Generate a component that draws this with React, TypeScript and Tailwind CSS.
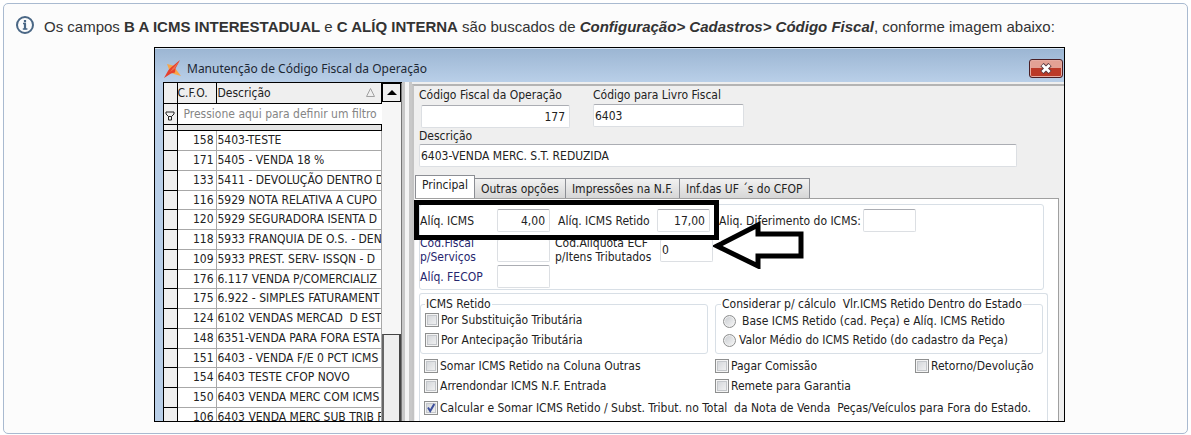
import React, { useState } from 'react';

const cfops = [
  { code: '158', name: '5403-TESTE' },
  { code: '171', name: '5405 - VENDA 18 %' },
  { code: '133', name: '5411 - DEVOLUÇÃO DENTRO D' },
  { code: '116', name: '5929 NOTA RELATIVA A CUPO' },
  { code: '120', name: '5929 SEGURADORA ISENTA D' },
  { code: '118', name: '5933 FRANQUIA DE O.S. - DEN' },
  { code: '109', name: '5933 PREST. SERV- ISSQN - D' },
  { code: '176', name: '6.117 VENDA P/COMERCIALIZ' },
  { code: '175', name: '6.922 - SIMPLES FATURAMENT' },
  { code: '124', name: '6102 VENDAS MERCAD  D EST' },
  { code: '148', name: '6351-VENDA PARA FORA ESTA' },
  { code: '151', name: '6403 - VENDA F/E 0 PCT ICMS' },
  { code: '154', name: '6403 TESTE CFOP NOVO' },
  { code: '150', name: '6403 VENDA MERC COM ICMS' },
  { code: '106', name: '6403 VENDA MERC SUB TRIB F' },
];

const tabs = ['Principal', 'Outras opções', 'Impressões na N.F.', 'Inf.das UF ´s do CFOP'];

const inputClass =
  'block h-[23px] rounded-[2px] border border-[#dcdfe3] border-t-[#abadb3] bg-white pr-1 pl-px text-[#222] outline-none';

interface CheckProps {
  label: string;
  className?: string;
  defaultChecked?: boolean;
}

const Check: React.FC<CheckProps> = ({ label, className = '', defaultChecked }) => (
  <label className={`flex items-center gap-0.5 whitespace-pre ${className}`}>
    <span className="relative block size-[14px] shrink-0">
      <input
        type="checkbox"
        defaultChecked={defaultChecked}
        className="peer block size-[14px] appearance-none border border-[#8e8f8f] bg-linear-to-br from-[#cfd2d6] to-[#f6f6f6] shadow-[inset_0_0_0_1px_#f4f4f4,inset_0_0_0_2px_#c4c7cb]"
      />
      <svg viewBox="0 0 14 14" className="pointer-events-none absolute inset-0 hidden peer-checked:block">
        <path d="M4 6.5 L6.2 10 L10.3 3" fill="none" stroke="#3c4f9c" strokeWidth="2" />
      </svg>
    </span>
    {label}
  </label>
);

const Radio: React.FC<{ label: string; className: string }> = ({ label, className }) => (
  <label className={`flex items-center whitespace-pre ${className}`}>
    <input
      type="radio"
      name="calculo"
      className="size-[13px] shrink-0 appearance-none rounded-full border border-[#8e8f8f] bg-linear-to-br from-[#c8cbcf] to-[#f8f8f8] shadow-[inset_0_0_0_1px_#f0f0f0] checked:bg-[#3c4f9c]"
    />
    {label}
  </label>
);

const TitleBar: React.FC = () => (
  <div className="flex h-[34px] items-center border-t border-[#dce8f5] bg-linear-to-b from-[#9cb6d3] to-[#b9cfe8] pr-px pl-[9px]">
    <svg viewBox="0 0 18 18" className="mt-1.5 size-[18px]">
      <path d="M3 4 L9 5.5 L12.5 10 L17 16 L10 14 L6 12 Z" fill="#f8a548" />
      <path d="M16 0 L11.5 8.5 L11 12.5 L7 13.5 L0 18 L4.5 10 L7 7.5 Z" fill="#e6402c" />
      <path d="M15 1.5 L8.5 8.5 L6 12 L10.5 9 Z" fill="#f0714f" />
    </svg>
    <h2 className="mt-[7px] ml-[5px] flex-1 font-['Noto_Sans','Open_Sans',sans-serif] text-[12px] text-[#1c2733]">
      Manutenção de Código Fiscal da Operação
    </h2>
    <button
      type="button"
      aria-label="Fechar"
      className="mt-1.5 flex h-[19px] w-[34px] items-center justify-center rounded-[3px] border border-[#4a1f25] bg-linear-to-b from-[#e3a194] from-45% to-[#bb3a28] to-50% shadow-[inset_0_0_0_1px_#e6aca2]"
    >
      <svg viewBox="0 0 14 11" className="h-[11px] w-[14px]">
        <path d="M3 1.5 L11 9.5 M11 1.5 L3 9.5" stroke="#5b3a40" strokeWidth="4.6" />
        <path d="M3.4 2 L10.6 9 M10.6 2 L3.4 9" stroke="#fff" strokeWidth="2.8" />
      </svg>
    </button>
  </div>
);

const CfopList: React.FC = () => (
  <div className="flex w-[239px] shrink-0 border-t border-l border-black bg-[#efefef]">
    <table className="w-[218px] table-fixed border-collapse self-start">
      <colgroup>
        <col className="w-[13px]" />
        <col className="w-[39px]" />
        <col />
      </colgroup>
      <thead className="text-left">
        <tr className="h-5 border-b border-black">
          <th className="border-r border-black p-0" />
          <th className="border-r border-black p-0 font-normal">C.F.O.</th>
          <th className="border-r border-black p-0 pl-px font-normal">
            <span className="flex items-center justify-between pr-1.5">
              Descrição
              <svg viewBox="0 0 9 9" className="size-[9px]">
                <path d="M4.5 0.5 L8.5 8.5 H0.5 Z" fill="none" stroke="#a0a0a0" />
              </svg>
            </span>
          </th>
        </tr>
        <tr className="h-[21px] bg-white">
          <th className="border-r border-b border-black bg-[#efefef] p-0">
            <svg viewBox="0 0 10 10" className="mx-auto mt-1 size-[10px]">
              <path d="M1 1 H9 V3 L6.5 5.5 H3.5 L1 3 Z M3.5 5.5 V9 H6.5 V5.5" fill="none" stroke="#222" />
            </svg>
          </th>
          <th colSpan={2} className="p-0 pl-1.5 font-normal text-[#858585]">
            Pressione aqui para definir um filtro
          </th>
        </tr>
        <tr className="h-[6px]">
          <th className="border-r border-b border-black p-0" />
          <th colSpan={2} className="border border-black bg-[#e4e4e4] p-0" />
        </tr>
      </thead>
      <tbody className="bg-white text-[#222]">
        {cfops.map((item) => (
          <tr key={item.code} className="h-5 nth-[4n]:h-[19px]">
            <td className="border-r border-b border-black bg-[#efefef] p-0" />
            <td className="border-r border-b border-[#a8a8a8] p-0 pr-0.5 text-right">{item.code}</td>
            <td className="overflow-hidden border-r border-b border-[#a8a8a8] p-0 pl-px whitespace-pre">
              {item.name}
            </td>
          </tr>
        ))}
      </tbody>
    </table>
    <div className="flex flex-1 flex-col border-r border-[#777] bg-[#f6f6f6]">
      <button
        type="button"
        aria-label="Rolar para cima"
        className="flex h-[19px] items-center justify-center border border-black bg-[#efefef]"
      >
        <svg viewBox="0 0 10 5" className="h-[5px] w-[10px]">
          <path d="M5 0 L10 5 H0 Z" />
        </svg>
      </button>
      <div className="mt-[232px] flex-1 border-2 border-t border-[#444] border-l-[#666] bg-[#efefef]" />
    </div>
  </div>
);

const RatesPanel: React.FC = () => (
  <div className="relative mr-[14px] ml-1 h-[86px] rounded-[3px] border border-[#d8dfe6] pt-1 text-[#222]">
    <div className="flex items-center">
      <label htmlFor="icms" className="w-[77px]">Alíq. ICMS</label>
      <input id="icms" defaultValue="4,00" className={`${inputClass} w-[53px] text-right`} />
      <label htmlFor="retido" className="ml-2 w-[99px] whitespace-nowrap">Alíq. ICMS Retido</label>
      <input id="retido" defaultValue="17,00" className={`${inputClass} w-[53px] text-right`} />
      <label htmlFor="diferimento" className="ml-[9px] w-[144px] whitespace-nowrap">Aliq. Diferimento do ICMS:</label>
      <input id="diferimento" className={`${inputClass} w-[53px]`} />
    </div>
    <div className="mt-1 flex items-center leading-[14px]">
      <label htmlFor="servicos" className="w-[77px] text-[#26266e]">
        Cód.Fiscal
        <br />
        p/Serviços
      </label>
      <input id="servicos" className={`${inputClass} w-[53px]`} />
      <label htmlFor="ecf" className="ml-[5px] w-[105px] whitespace-nowrap">
        Cód.Alíquota ECF
        <br />
        p/Itens Tributados
      </label>
      <input id="ecf" defaultValue="0" className={`${inputClass} w-[53px]`} />
    </div>
    <div className="mt-px flex items-center">
      <label htmlFor="fecop" className="w-[77px] text-[#26266e]">Alíq. FECOP</label>
      <input id="fecop" className={`${inputClass} w-[53px]`} />
    </div>

    {/* Destaque das alíquotas */}
    <div className="pointer-events-none absolute -top-[5px] -left-[6px] h-10 w-[305px] border-[5px] border-black" />
    <svg viewBox="0 0 92 48" className="pointer-events-none absolute top-4 left-[293px] h-12 w-[92px]">
      <path d="M4 25 L45 4 V13 H88 V35 H45 V45 Z" fill="#fff" stroke="#000" strokeWidth="5" />
    </svg>
  </div>
);

const OptionsPanel: React.FC = () => (
  <div className="mt-[3px] mr-[10px] ml-1 rounded-t-[3px] border border-b-0 border-[#d8dfe6] pt-0.5 pb-4 text-[#222]">
    <div className="flex gap-[7px] pr-1">
      <fieldset className="h-[58px] w-[288px] rounded-[3px] border border-[#d8dfe6] px-1">
        <legend className="px-px leading-4">ICMS Retido</legend>
        <Check label="Por Substituição Tributária" />
        <Check label="Por Antecipação Tributária" className="mt-1" />
      </fieldset>
      <fieldset className="h-[58px] flex-1 rounded-[3px] border border-[#d8dfe6] px-[7px]">
        <legend className="-ml-0.5 px-px leading-4 whitespace-pre">
          Considerar p/ cálculo  Vlr.ICMS Retido Dentro do Estado
        </legend>
        <Radio label="Base ICMS Retido (cad. Peça) e Alíq. ICMS Retido" className="mt-px gap-1.5" />
        <Radio label="Valor Médio do ICMS Retido (do cadastro da Peça)" className="mt-[3px] gap-[3px]" />
      </fieldset>
    </div>
    <div className="mt-1 ml-1 grid grid-cols-[291px_200px_1fr] gap-y-1">
      <Check label="Somar ICMS Retido na Coluna Outras" />
      <Check label="Pagar Comissão" />
      <Check label="Retorno/Devolução" />
      <Check label="Arrendondar ICMS N.F. Entrada" />
      <Check label="Remete para Garantia" />
    </div>
    <Check
      label="Calcular e Somar ICMS Retido / Subst. Tribut. no Total  da Nota de Venda  Peças/Veículos para Fora do Estado."
      className="mt-[6px] ml-1"
      defaultChecked
    />
  </div>
);

const CfopForm: React.FC = () => {
  const [activeTab, setActiveTab] = useState('Principal');

  return (
    <div className="mt-0.5 min-w-0 flex-1 border-t-2 border-l-2 border-[#c4c4c4] border-t-[#b4b4b4] pt-px">
      <div className="flex pl-[5px]">
        <div className="w-[174px]">
          <label htmlFor="codigo" className="block">Código Fiscal da Operação</label>
          <input id="codigo" defaultValue="177" className={`${inputClass} mt-0.5 ml-0.5 w-[149px] text-right`} />
        </div>
        <div>
          <label htmlFor="livro" className="block">Código para Livro Fiscal</label>
          <input id="livro" defaultValue="6403" className={`${inputClass} mt-px w-[151px]`} />
        </div>
      </div>
      <div className="pr-[47px] pl-[5px]">
        <label htmlFor="descricao" className="block">Descrição</label>
        <input id="descricao" defaultValue="6403-VENDA MERC. S.T. REDUZIDA" className={`${inputClass} w-full`} />
      </div>

      <div role="tablist" className="mt-2 flex items-end pl-px">
        {tabs.map((tab) => (
          <button
            key={tab}
            type="button"
            role="tab"
            aria-selected={activeTab === tab}
            onClick={() => setActiveTab(tab)}
            className={
              activeTab === tab
                ? 'h-[23px] border border-b-0 border-[#8c8e94] bg-white px-1.5 pb-1'
                : 'h-5 border border-b-0 border-l-0 border-[#8c8e94] bg-linear-to-b from-[#f2f2f2] to-[#d6d6d6] px-1.5 whitespace-nowrap'
            }
          >
            {tab}
          </button>
        ))}
      </div>
      <div className="mr-[5px] ml-px border-t border-r border-[#a0a0a0] bg-white pt-[5px]">
        <RatesPanel />
        <OptionsPanel />
      </div>
    </div>
  );
};

const App: React.FC = () => {
  return (
    <main className="p-[3px] pb-0.5">
      <section className="rounded-[5px] border border-[#a9bad0] bg-[#fcfcfc] pr-3 pb-[11px] pl-10 font-['Liberation_Sans',Arial,sans-serif] text-[#333]">
        <div className="relative">
          <svg viewBox="0 0 20 20" className="absolute top-[11px] -left-[29px] size-5" fill="none" stroke="#4a6785">
            <circle cx="10" cy="10" r="8" strokeWidth="2" />
            <path d="M8 8.5 H10.2 V14 M7.8 14 H12.4" strokeWidth="1.4" />
            <path d="M10 8.5 V14.2 M10 5 V7.2" strokeWidth="2.2" />
          </svg>
          <p className="pt-3 text-[15px] leading-[22px]">
            Os campos <strong>B A ICMS INTERESTADUAL</strong> e <strong>C ALÍQ INTERNA</strong> são buscados de{' '}
            <strong>
              <em>Configuração&gt; Cadastros&gt; Código Fiscal</em>
            </strong>
            , conforme imagem abaixo:
          </p>
        </div>

        <div className="mx-auto mt-[9px] max-h-[375px] max-w-[911px] overflow-hidden border border-black bg-[#b9cfe8] font-['DejaVu_Sans_Condensed','DejaVu_Sans',sans-serif] text-[12px] leading-4 text-[#222]">
          <TitleBar />
          <div className="ml-2 flex bg-[#efefef]">
            <CfopList />
            <div className="w-[10px] shrink-0 border-x-[3px] border-[#c8c8c8] bg-[#f4f4f4]" />
            <CfopForm />
          </div>
        </div>
      </section>
    </main>
  );
};

export default App;
